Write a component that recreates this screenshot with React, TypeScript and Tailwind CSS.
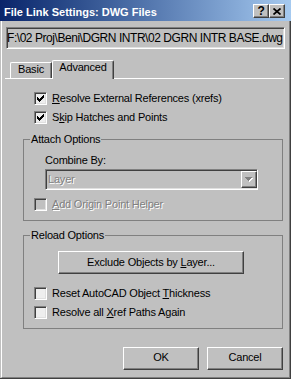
import React from 'react';

const SUNKEN =
  'border border-t-[#808080] border-l-[#808080] border-b-white border-r-white shadow-[inset_1px_1px_0_#404040,inset_-1px_-1px_0_#dfdfdf]';
const RAISED =
  'border border-t-white border-l-white border-b-[#404040] border-r-[#404040] shadow-[inset_-1px_-1px_0_#808080]';
const DISABLED = 'text-[#808080] [text-shadow:1px_1px_0_#fff]';

function CheckMark() {
  // classic 7x7 pixel check
  const cols = [2, 3, 4, 3, 2, 1, 0];
  return (
    <svg width="7" height="7" viewBox="0 0 7 7" shapeRendering="crispEdges">
      {cols.map((y, x) => (
        <rect key={x} x={x} y={y} width="1" height="3" fill="#000" />
      ))}
    </svg>
  );
}

function Check({
  checked = false,
  disabled = false,
  children,
}: {
  checked?: boolean;
  disabled?: boolean;
  children: React.ReactNode;
}) {
  return (
    <div className="flex h-[13px] items-center gap-[5px]">
      <div
        className={`${SUNKEN} flex h-[13px] w-[13px] shrink-0 items-start pl-[2px] pt-[2px] ${
          disabled ? 'bg-[#c0c0c0]' : 'bg-[#eeeeee]'
        }`}
      >
        {checked && <CheckMark />}
      </div>
      <span className={`whitespace-nowrap ${disabled ? DISABLED : ''}`}>{children}</span>
    </div>
  );
}

function Key({ children }: { children: React.ReactNode }) {
  return <span className="underline underline-offset-[1px] decoration-1">{children}</span>;
}

export default function App() {
  return (
    <div className="flex h-[379px] w-[291px] flex-col overflow-hidden bg-[#c0c0c0] font-['Liberation_Sans',Arial,sans-serif] text-[11px] leading-[13px] tracking-[-0.2px] text-black">
      {/* Title bar */}
      <div className="flex h-[21px] shrink-0 items-start bg-linear-to-r from-[#0a246a] to-[#a6caf0]">
        <span className="ml-[4px] mt-[6px] whitespace-nowrap font-bold tracking-normal text-white">
          File Link Settings: DWG Files
        </span>
        <div className="ml-auto mr-[6px] mt-[4px] flex">
          <div className={`${RAISED} flex h-[14px] w-[16px] items-center justify-center bg-[#c0c0c0]`}>
            <span className="text-[12px] font-bold leading-[12px]">?</span>
          </div>
          <div className={`${RAISED} flex h-[14px] w-[16px] items-center justify-center bg-[#c0c0c0]`}>
            <svg width="8" height="7" viewBox="0 0 8 7">
              <path d="M0.5 0.5 L7.5 6.5 M7.5 0.5 L0.5 6.5" stroke="#000" strokeWidth="1.7" />
            </svg>
          </div>
        </div>
      </div>

      {/* Window body */}
      <div className="flex flex-1 border-b border-r border-[#404040] pl-[1px]">
        <div className="flex flex-1 flex-col border-b border-l border-r border-b-[#808080] border-l-white border-r-[#808080]">
          {/* File path */}
          <div
            className={`${SUNKEN} ml-[4px] mt-[6px] flex h-[22px] w-[279px] items-center overflow-hidden whitespace-nowrap text-[12px] tracking-[-0.45px]`}
          >
            F:\02 Proj\Beni\DGRN INTR\02 DGRN INTR BASE.dwg
          </div>

          {/* Tabs */}
          <div className="ml-[3px] mt-[11px] flex h-[19px] w-[279px] items-end border-b border-white pl-[5px]">
            <div className="flex h-[16px] w-[42px] justify-center rounded-tl-[2px] border-l border-r border-t border-l-white border-r-[#404040] border-t-white shadow-[inset_-1px_0_0_#808080]">
              Basic
            </div>
            <div className="relative -mb-[1px] flex h-[19px] w-[62px] justify-center rounded-t-[2px] border-l border-r border-t border-l-white border-r-[#404040] border-t-white bg-[#c0c0c0] shadow-[inset_-1px_0_0_#808080]">
              Advanced
            </div>
          </div>

          {/* Top checkboxes */}
          <div className="ml-[32px] mt-[13px]">
            <Check checked>
              <Key>R</Key>esolve External References (xrefs)
            </Check>
          </div>
          <div className="ml-[32px] mt-[6px]">
            <Check checked>
              S<Key>k</Key>ip Hatches and Points
            </Check>
          </div>

          {/* Attach Options */}
          <fieldset className="ml-[21px] mt-[9px] w-[260px] border border-[#808080] pb-[9px]">
            <legend className="ml-[6px] px-[1px]">Attach Options</legend>
            <div className="ml-[21px] mt-[8px] h-[13px]">Combine By:</div>
            <div className={`${SUNKEN} ml-[21px] mt-[2px] flex h-[21px] w-[213px] items-center bg-[#c0c0c0]`}>
              <span className={`flex-1 pl-[2px] ${DISABLED}`}>Layer</span>
              <div className={`${RAISED} flex h-[17px] w-[16px] items-center justify-center bg-[#c0c0c0]`}>
                <svg width="8" height="5" viewBox="0 0 8 5" shapeRendering="crispEdges">
                  <path d="M1 1h7v1h-1v1h-1v1h-1v1h-1v-1h-1v-1h-1v-1h-1z" fill="#fff" />
                  <path d="M0 0h7v1h-1v1h-1v1h-1v1h-1v-1h-1v-1h-1v-1h-1z" fill="#808080" />
                </svg>
              </div>
            </div>
            <div className="ml-[10px] mt-[8px]">
              <Check disabled>
                <Key>A</Key>dd Origin Point Helper
              </Check>
            </div>
          </fieldset>

          {/* Reload Options */}
          <fieldset className="ml-[21px] mt-[8px] w-[260px] border border-[#808080] pb-[9px]">
            <legend className="ml-[6px] px-[1px]">Reload Options</legend>
            <div className={`${RAISED} ml-[34px] mt-[9px] flex h-[23px] w-[186px] items-center justify-center`}>
              <span>
                Exclude Objects by <Key>L</Key>ayer...
              </span>
            </div>
            <div className="ml-[10px] mt-[13px]">
              <Check>
                Reset AutoCAD Object <Key>T</Key>hickness
              </Check>
            </div>
            <div className="ml-[10px] mt-[6px]">
              <Check>
                Resolve all <Key>X</Key>ref Paths Again
              </Check>
            </div>
          </fieldset>

          {/* Dialog buttons */}
          <div className="mr-[6px] mt-[18px] flex justify-end gap-[8px]">
            <div className={`${RAISED} flex h-[23px] w-[76px] items-center justify-center pb-[2px]`}>OK</div>
            <div className={`${RAISED} flex h-[23px] w-[76px] items-center justify-center pb-[2px]`}>Cancel</div>
          </div>
        </div>
      </div>
    </div>
  );
}
